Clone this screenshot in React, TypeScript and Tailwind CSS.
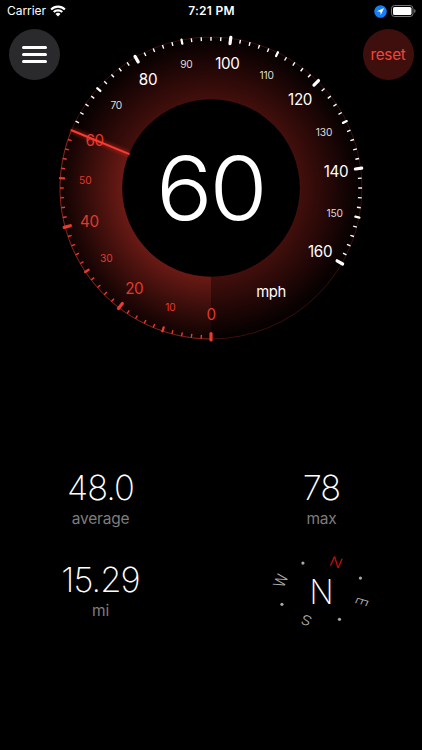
import React from "react";

const CX = 151;
const CY = 151;
const SPEED = 60;
const MAX = 160;
const DEG_PER_UNIT = 1.875;

// Angle grows clockwise from the bottom of the dial.
function polar(value: number, r: number) {
  const a = (value * DEG_PER_UNIT * Math.PI) / 180;
  return { x: CX - r * Math.sin(a), y: CY + r * Math.cos(a) };
}

function Dial() {
  const ticks = Array.from({ length: MAX / 2 + 1 }, (_, i) => i * 2);
  const labels = Array.from({ length: MAX / 10 + 1 }, (_, i) => i * 10);
  const tip = polar(SPEED, 151);
  const base = polar(SPEED, 89);
  return (
    <svg width="302" height="302" viewBox="0 0 302 302" className="shrink-0 overflow-visible">
      <defs>
        <radialGradient id="face" gradientUnits="userSpaceOnUse" cx={CX} cy={CY} r="151">
          <stop offset="0.58" stopColor="#430f0c" />
          <stop offset="0.97" stopColor="#080101" />
          <stop offset="1" stopColor="#050000" />
        </radialGradient>
        <radialGradient id="swept" gradientUnits="userSpaceOnUse" cx={CX} cy={CY} r="151">
          <stop offset="0.58" stopColor="#6b1a15" />
          <stop offset="0.97" stopColor="#140403" />
          <stop offset="1" stopColor="#100302" />
        </radialGradient>
        <filter id="glow" filterUnits="userSpaceOnUse" x="0" y="80" width="90" height="50">
          <feGaussianBlur stdDeviation="2" />
        </filter>
      </defs>
      <circle cx={CX} cy={CY} r="151" fill="url(#face)" stroke="#4a1310" strokeWidth="0.8" />
      <path
        d={`M${CX} ${CY} L${CX} 302 A151 151 0 0 1 ${tip.x} ${tip.y} Z`}
        fill="url(#swept)"
      />
      <path
        d={`M${CX} 302 A151 151 0 0 1 ${tip.x} ${tip.y}`}
        fill="none"
        stroke="#8d251e"
        strokeWidth="0.9"
      />
      <circle cx={CX} cy={CY} r="88.8" fill="#000" />
      {ticks.map((v) => {
        const major = v % 20 === 0;
        const mid = v % 10 === 0;
        const a = polar(v, major ? 152 : mid ? 151.3 : 151);
        const b = polar(v, major ? 145.6 : 147.2);
        if (v === SPEED) return null;
        return (
          <line
            key={v}
            x1={a.x}
            y1={a.y}
            x2={b.x}
            y2={b.y}
            stroke={v < SPEED ? "#e93b30" : "#fff"}
            strokeWidth={major ? 3.2 : mid ? 2.3 : 1.4}
            strokeLinecap={major || mid ? "round" : "butt"}
          />
        );
      })}
      {labels.map((v) => {
        const p = polar(v, 126);
        const major = v % 20 === 0;
        return (
          <text
            key={v}
            x={p.x}
            y={p.y + (major ? 5.9 : 4)}
            textAnchor="middle"
            fontSize={major ? 15.2 : 10.2}
            letterSpacing={major ? -0.35 : -0.15}
            fill={v <= SPEED ? "#e0392e" : major ? "#fff" : "#ddd"}
          >
            {v}
          </text>
        );
      })}
      <text x="211" y="260" textAnchor="middle" fontSize="14.8" letterSpacing="-0.35" fill="#fff">
        mph
      </text>
      <line x1={tip.x} y1={tip.y} x2={base.x} y2={base.y} stroke="#ff2d20" strokeWidth="3" opacity="0.6" filter="url(#glow)" />
      <line x1={tip.x} y1={tip.y} x2={base.x} y2={base.y} stroke="#f63c30" strokeWidth="2" strokeLinecap="round" />
      <text
        transform="translate(150.2 183.3) scale(1.07 1)"
        textAnchor="middle"
        fontSize="88"
        fontWeight="300"
        letterSpacing="-3"
        fill="#fff"
      >
        {SPEED}
      </text>
    </svg>
  );
}

function StatusBar() {
  return (
    <div className="grid h-[22px] grid-cols-3 items-center pr-[6px] pl-[7px] text-[12px] leading-none">
      <div className="flex items-center gap-[4px]">
        <span className="tracking-[-0.05px]">Carrier</span>
        <svg width="16" height="12" viewBox="0 0 16 12" fill="none" stroke="#fff" strokeWidth="2.1">
          <path d="M1.1 4.5 A9.8 9.8 0 0 1 14.9 4.5" />
          <path d="M3.7 7.1 A6.1 6.1 0 0 1 12.3 7.1" />
          <path d="M8 11.5 L5.5 9 A3.5 3.5 0 0 1 10.5 9 Z" fill="#fff" stroke="none" />
        </svg>
      </div>
      <div className="text-center font-semibold tracking-[0.25px]">7:21 PM</div>
      <div className="flex items-center justify-end gap-1">
        <svg width="13" height="13" viewBox="0 0 13 13">
          <circle cx="6.5" cy="6.5" r="6.3" fill="#157efb" />
          <path d="M10 3 L2.9 6.2 L6.3 6.7 L6.8 10.1 Z" fill="#fff" />
        </svg>
        <svg width="25" height="12" viewBox="0 0 25 12">
          <rect x="0.5" y="0.5" width="21.5" height="11" rx="3" fill="none" stroke="#777" />
          <rect x="2" y="2" width="18.5" height="8" rx="1.6" fill="#fff" />
          <path d="M23.2 4 Q24.6 4.5 24.6 6 Q24.6 7.5 23.2 8 Z" fill="#777" />
        </svg>
      </div>
    </div>
  );
}

function Stat({ value, label }: { value: string; label: string }) {
  return (
    <div className="flex h-[92px] flex-col items-center">
      <div className="text-[34.5px] leading-[40px] font-extralight tracking-[-0.9px]">{value}</div>
      <div className="mt-px text-[15.5px] leading-[20px] tracking-[-0.2px] text-[#7d7d7d]">{label}</div>
    </div>
  );
}

// The ring of cardinal points is seen tilted, hence the vertical squash.
function Compass() {
  const points = [
    { t: "N", a: 20, c: "#d40f0f" },
    { t: "E", a: 110, c: "#b0b0b0" },
    { t: "S", a: 200, c: "#b0b0b0" },
    { t: "W", a: 290, c: "#b0b0b0" },
  ];
  const at = (deg: number) => {
    const r = (deg * Math.PI) / 180;
    return { x: 43.3 * Math.sin(r) - 0.8, y: -31 * Math.cos(r) - 0.3 };
  };
  return (
    <svg width="110" height="63" viewBox="-55 -31.5 110 63" className="overflow-visible">
      {points.map((p) => {
        const l = at(p.a);
        const d = at(p.a + 45);
        return (
          <g key={p.t}>
            <g transform={`translate(${l.x} ${l.y}) scale(1 0.82) rotate(${p.a})`}>
              <text x="0" y="5.9" textAnchor="middle" fontSize="16.2" fontWeight="300" fill={p.c}>
                {p.t}
              </text>
            </g>
            <circle cx={d.x} cy={d.y} r="1.6" fill="#a8a8a8" />
          </g>
        );
      })}
      <text x="-12.4" y="12" textLength="24" lengthAdjust="spacingAndGlyphs" fontSize="34.4" fontWeight="200" fill="#fff">
        N
      </text>
    </svg>
  );
}

export default function App() {
  return (
    <div className="flex h-[750px] w-[422px] flex-col overflow-hidden bg-black font-['Inter','Liberation_Sans',sans-serif] text-white">
      <StatusBar />
      <main className="flex items-start justify-between px-[8.5px]">
        <button aria-label="menu" className="mt-[7px] -mr-[1px] flex size-[51px] shrink-0 flex-col items-center justify-center gap-[3.6px] rounded-full bg-[#2a2a2d]">
          <span className="h-[3.2px] w-[25px] rounded-full bg-white" />
          <span className="h-[3.2px] w-[25px] rounded-full bg-white" />
          <span className="h-[3.2px] w-[25px] rounded-full bg-white" />
        </button>
        <div className="-mx-4 mt-[15px]">
          <Dial />
        </div>
        <button className="mt-[7px] flex size-[51px] shrink-0 items-center justify-center rounded-full bg-[#3f0f0d] pt-[2px] text-[15.2px] tracking-[-0.2px] text-[#f5443a]">
          reset
        </button>
      </main>
      <section className="-mx-[10px] mt-[129px] grid grid-cols-2">
        <Stat value="48.0" label="average" />
        <Stat value="78" label="max" />
        <Stat value="15.29" label="mi" />
        <div className="flex justify-center">
          <Compass />
        </div>
      </section>
    </div>
  );
}
